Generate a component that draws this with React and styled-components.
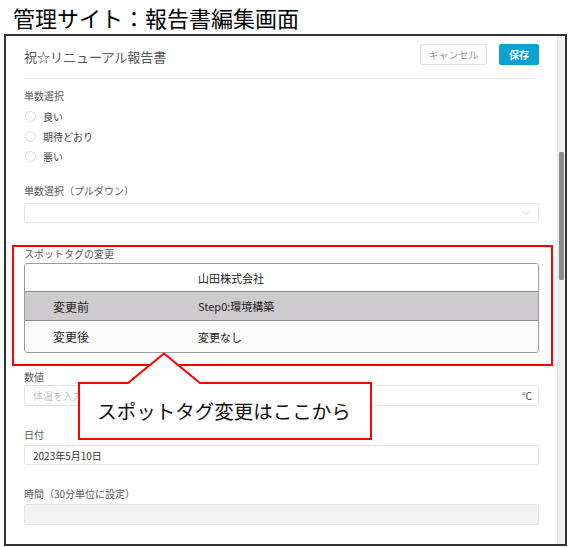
import styled, { createGlobalStyle } from 'styled-components';
import { ChevronDown } from 'lucide-react';

const GlobalStyle = createGlobalStyle`
    html, body {
        margin: 0;
        padding: 0;
        background: #fff;
    }
    body {
        font-family: "Noto Sans CJK JP", "Noto Sans", "Liberation Sans", sans-serif;
        color: #333;
    }
    * {
        box-sizing: border-box;
    }
`;

const PageTitle = styled.h1`
    margin: 0;
    height: 34px;
    padding-left: 13px;
    font-size: 22px;
    font-weight: 400;
    line-height: 34px;
    color: #000;
`;

const Frame = styled.div`
    position: relative;
    margin-left: 4px;
    width: 563px;
    height: 512px;
    border: 2px solid #333;
    display: flex;
    overflow: hidden;
`;

const Content = styled.div`
    flex: 1;
    padding: 0 18px;
`;

const Scrollbar = styled.div`
    width: 8px;
    background: #f0f0f0;
    border-left: 1px solid #e6e6e6;
    padding-top: 116px;
`;

const Thumb = styled.div`
    height: 128px;
    margin: 0 1px;
    background: #8c8c8c;
    border-radius: 1px;
`;

const Header = styled.div`
    display: flex;
    align-items: center;
    height: 43px;
    padding: 8px 0 13px;
    border-bottom: 1px solid #e8e8e8;
`;

const ReportTitle = styled.div`
    flex: 1;
    font-size: 13px;
    color: #555;
    padding-top: 3px;
`;

const Button = styled.button`
    height: 21px;
    padding: 0;
    margin-left: 12px;
    width: ${(p) => (p.$primary ? '40px' : '67px')};
    border: 1px solid ${(p) => (p.$primary ? '#0aa3cf' : '#e2e2e2')};
    border-radius: 2px;
    background: ${(p) => (p.$primary ? '#0aa3cf' : '#fff')};
    color: ${(p) => (p.$primary ? '#fff' : '#9a9a9a')};
    font-family: inherit;
    font-size: 10px;
    font-weight: ${(p) => (p.$primary ? 700 : 400)};
    line-height: 19px;
`;

const Label = styled.div`
    margin-top: ${(p) => p.$top}px;
    height: 14px;
    font-size: 10px;
    line-height: 14px;
    color: #5a5a5a;
`;

const RadioGroup = styled.div`
    margin-top: 3px;
`;

const RadioRow = styled.label`
    display: flex;
    align-items: center;
    height: 20px;
    gap: 7px;
    font-size: 10px;
    color: #444;
`;

const RadioCircle = styled.span`
    width: 11px;
    height: 11px;
    margin-left: 1px;
    border: 1px solid #dcdcdc;
    border-radius: 50%;
    background: #fff;
`;

const Field = styled.div`
    display: flex;
    align-items: center;
    margin-top: ${(p) => p.$top}px;
    height: ${(p) => p.$h || 20}px;
    padding: 0 6px 0 8px;
    border: 1px solid #e6e6e6;
    border-radius: 2px;
    background: ${(p) => (p.$disabled ? '#f3f3f3' : '#fff')};
    font-size: 10px;
    color: #333;
`;

const Placeholder = styled.span`
    flex: 1;
    color: #c8c8c8;
`;

const Unit = styled.span`
    color: #444;
    font-size: 10px;
`;

const Spacer = styled.span`
    flex: 1;
`;

const TagSection = styled.div`
    position: relative;
    margin-top: 24px;

    &::after {
        content: '';
        position: absolute;
        top: -2px;
        left: -12px;
        right: -14px;
        bottom: -13px;
        border: 2px solid #f00;
        pointer-events: none;
    }
`;

const TagTable = styled.div`
    margin-top: 2px;
    border: 1px solid #9c9c9c;
    border-radius: 3px;
    overflow: hidden;
`;

const TagRow = styled.div`
    display: grid;
    grid-template-columns: 145px 1fr;
    align-items: center;
    height: ${(p) => p.$h}px;
    padding-left: 28px;
    background: ${(p) => p.$bg};
    border-top: ${(p) => (p.$first ? 'none' : '1px solid #8a8a8a')};
    color: #222;
`;

const TagKey = styled.span`
    font-size: 12px;
`;

const TagValue = styled.span`
    font-size: 11px;
`;

const Callout = styled.div`
    position: absolute;
    left: 72px;
    top: 316px;
    width: 294px;
    height: 88px;

    & svg {
        position: absolute;
        inset: 0;
    }
`;

const CalloutText = styled.div`
    position: relative;
    display: flex;
    align-items: center;
    justify-content: center;
    margin-top: 30px;
    height: 57px;
    font-size: 19.5px;
    color: #111;
    padding-right: 2px;
`;

const radios = ['良い', '期待どおり', '悪い'];

const tagRows = [
    { key: '', value: '山田株式会社', h: 27, bg: '#fff' },
    { key: '変更前', value: 'Step0:環境構築', h: 29, bg: '#cdcbcd' },
    { key: '変更後', value: '変更なし', h: 32, bg: '#fbfbfb' },
];

export default function App() {
    return (
        <>
            <GlobalStyle />
            <PageTitle>管理サイト：報告書編集画面</PageTitle>
            <Frame>
                <Content>
                    <Header>
                        <ReportTitle>祝☆リニューアル報告書</ReportTitle>
                        <Button>キャンセル</Button>
                        <Button $primary>保存</Button>
                    </Header>

                    <Label $top={10}>単数選択</Label>
                    <RadioGroup>
                        {radios.map((r) => (
                            <RadioRow key={r}>
                                <RadioCircle />
                                {r}
                            </RadioRow>
                        ))}
                    </RadioGroup>

                    <Label $top={18}>単数選択（プルダウン）</Label>
                    <Field $top={5}>
                        <Spacer />
                        <ChevronDown size={12} strokeWidth={1.3} color="#b5b5b5" />
                    </Field>

                    <TagSection>
                        <Label $top={0}>スポットタグの変更</Label>
                        <TagTable>
                            {tagRows.map((row, i) => (
                                <TagRow key={i} $h={row.h} $bg={row.bg} $first={i === 0}>
                                    <TagKey>{row.key}</TagKey>
                                    <TagValue>{row.value}</TagValue>
                                </TagRow>
                            ))}
                        </TagTable>
                    </TagSection>

                    <Label $top={17}>数値</Label>
                    <Field $top={1} $h={21}>
                        <Placeholder>体温を入力</Placeholder>
                        <Unit>°C</Unit>
                    </Field>

                    <Label $top={22}>日付</Label>
                    <Field $top={3}>2023年5月10日</Field>

                    <Label $top={22}>時間（30分単位に設定）</Label>
                    <Field $top={3} $h={21} $disabled />
                </Content>
                <Scrollbar>
                    <Thumb />
                </Scrollbar>

                <Callout>
                    <svg width="294" height="88" viewBox="0 0 294 88">
                        <path
                            d="M1 31 L50 31 L86 1.5 L122 31 L293 31 L293 87 L1 87 Z"
                            fill="#fff"
                            stroke="#f00"
                            strokeWidth="2"
                            strokeLinejoin="miter"
                        />
                    </svg>
                    <CalloutText>スポットタグ変更はここから</CalloutText>
                </Callout>
            </Frame>
        </>
    );
}
